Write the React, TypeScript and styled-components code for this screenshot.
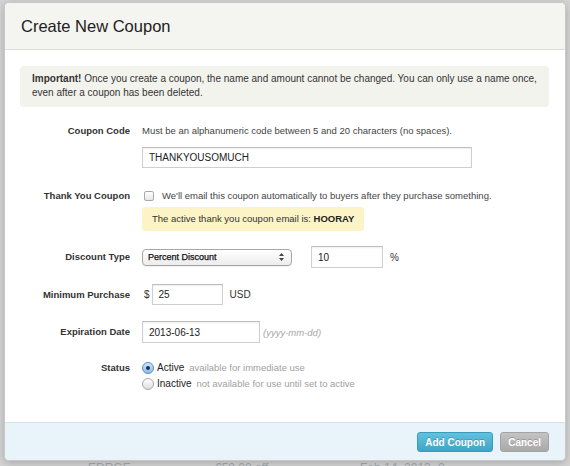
import React from "react";
import styled, { createGlobalStyle } from "styled-components";

const GlobalStyle = createGlobalStyle`
  html, body {
    margin: 0;
    padding: 0;
  }
  body {
    background: #d5d5d5;
    font-family: "Liberation Sans", Helvetica, Arial, sans-serif;
    font-size: 9.5px;
    color: #333;
  }
`;

const Stage = styled.div`
  position: relative;
  width: 570px;
  height: 466px;
  overflow: hidden;
`;

const Backdrop = styled.div`
  padding-top: 460px;
`;

const BackRow = styled.div`
  display: flex;
  padding-left: 88px;
  color: #a3abb3;
  font-size: 12px;
  line-height: 16px;
`;

const BackCell = styled.div<{ $w: number }>`
  width: ${(p) => p.$w}px;
`;

const Modal = styled.div`
  position: absolute;
  left: 4px;
  top: 2px;
  width: 562px;
  height: 459px;
  box-sizing: border-box;
  background: #fff;
  border: 1px solid #c8c8c8;
  border-radius: 5px;
  box-shadow: 0 2px 8px rgba(0, 0, 0, 0.22);
  overflow: hidden;
  display: flex;
  flex-direction: column;
`;

const Header = styled.div`
  height: 47px;
  box-sizing: border-box;
  background: #f4f4f0;
  border-bottom: 1px solid #dddcd5;
  padding: 0 16px;
  display: flex;
  align-items: center;
`;

const Title = styled.h3`
  margin: 0;
  font-size: 16.5px;
  font-weight: normal;
  color: #222;
`;

const Body = styled.div`
  flex: 1;
  padding: 16px 16px 0 15px;
`;

const Notice = styled.p`
  margin: 0;
  background: #f3f3ee;
  border-radius: 4px;
  padding: 6px 12px 7px;
  font-size: 10px;
  line-height: 14px;
  color: #333;
`;

const Field = styled.div<{ $mt: number; $center?: boolean }>`
  display: grid;
  grid-template-columns: 110px 1fr;
  column-gap: 12px;
  margin-top: ${(p) => p.$mt}px;
  align-items: ${(p) => (p.$center ? "center" : "start")};
`;

const Label = styled.div<{ $lh?: number }>`
  text-align: right;
  font-weight: bold;
  color: #333;
  line-height: ${(p) => p.$lh ?? 14}px;
`;

const Help = styled.div`
  line-height: 14px;
  color: #444;
`;

const Inline = styled.div`
  display: flex;
  align-items: center;
`;

const TextInput = styled.div<{ $w: number; $h: number }>`
  width: ${(p) => p.$w}px;
  height: ${(p) => p.$h}px;
  box-sizing: border-box;
  border: 1px solid #cfcfcf;
  border-top-color: #bdbdbd;
  box-shadow: inset 0 1px 2px rgba(0, 0, 0, 0.07);
  background: #fff;
  padding: 0 6px;
  display: flex;
  align-items: center;
  font-size: 10px;
  color: #222;
`;

const CodeInput = styled(TextInput)`
  margin-top: 9px;
`;

const Checkbox = styled.span`
  width: 10px;
  height: 10px;
  margin-left: 2px;
  margin-right: 8px;
  box-sizing: border-box;
  border: 1px solid #a9a9a9;
  border-radius: 2px;
  background: linear-gradient(#fff, #e6e6e6);
`;

const Callout = styled.div`
  margin-top: 4px;
  width: fit-content;
  background: #fcf4c6;
  border-radius: 3px;
  padding: 0 10px;
  line-height: 24px;
  color: #333;

  b {
    color: #222;
  }
`;

const Select = styled.div`
  width: 150px;
  height: 17px;
  box-sizing: border-box;
  border: 1px solid #a6a6a6;
  border-radius: 4px;
  background: linear-gradient(#ffffff, #ececec);
  box-shadow: 0 1px 0 rgba(0, 0, 0, 0.05);
  display: flex;
  align-items: center;
  justify-content: space-between;
  padding: 0 7px 0 5px;
  font-size: 9px;
  color: #111;
  -webkit-text-stroke: 0.25px #111;
`;

const Unit = styled.span<{ $ml: number }>`
  margin-left: ${(p) => p.$ml}px;
  font-size: 10px;
  color: #333;
`;

const Hint = styled.span`
  margin-left: 3px;
  font-style: italic;
  color: #a5a5a5;
`;

const SpacedInput = styled(TextInput)<{ $ml: number }>`
  margin-left: ${(p) => p.$ml}px;
`;

const RadioList = styled.div`
  display: flex;
  flex-direction: column;
`;

const RadioRow = styled.div`
  display: flex;
  align-items: center;
  line-height: 16px;
`;

const Radio = styled.span<{ $on?: boolean }>`
  width: 12px;
  height: 12px;
  box-sizing: border-box;
  border-radius: 50%;
  margin-right: 3px;
  display: flex;
  align-items: center;
  justify-content: center;
  border: 1px solid ${(p) => (p.$on ? "#5a8cc0" : "#a8a8a8")};
  background: ${(p) =>
    p.$on
      ? "linear-gradient(#cfe6fb, #8dbdf0)"
      : "linear-gradient(#ffffff, #dedede)"};

  &::after {
    content: "";
    display: ${(p) => (p.$on ? "block" : "none")};
    width: 4px;
    height: 4px;
    border-radius: 50%;
    background: #1c3450;
  }
`;

const OptionName = styled.span`
  color: #222;
  font-size: 10px;
`;

const OptionNote = styled.span`
  margin-left: 5px;
  color: #a0a0a0;
`;

const Footer = styled.div`
  height: 38px;
  box-sizing: border-box;
  background: #e8f4fa;
  border-top: 1px solid #cfe3ee;
  display: flex;
  justify-content: flex-end;
  align-items: center;
  gap: 7px;
  padding: 1px 16px 0 0;
`;

const Button = styled.button<{ $primary?: boolean }>`
  height: 20px;
  padding: 0 ${(p) => (p.$primary ? 7 : 7)}px;
  font-family: inherit;
  font-size: 10px;
  font-weight: bold;
  color: #fff;
  border-radius: 3px;
  text-shadow: 0 -1px 0 rgba(0, 0, 0, 0.2);
  border: 1px solid ${(p) => (p.$primary ? "#3a9aba" : "#a3a3a3")};
  background: ${(p) =>
    p.$primary
      ? "linear-gradient(#62c2df, #3ea4c6)"
      : "linear-gradient(#c4c4c4, #a9a9a9)"};
  cursor: pointer;
`;

const SelectArrows = () => (
  <svg width="5" height="8" viewBox="0 0 5 8">
    <path d="M2.5 0 L5 3 H0 Z M0 5 H5 L2.5 8 Z" fill="#444" />
  </svg>
);

export default function App() {
  return (
    <>
      <GlobalStyle />
      <Stage>
        <Backdrop>
          <BackRow>
            <BackCell $w={127}>EDRGE</BackCell>
            <BackCell $w={145}>€50.00 off</BackCell>
            <BackCell $w={78}>Feb 14, 2013</BackCell>
            <BackCell $w={20}>0</BackCell>
          </BackRow>
        </Backdrop>

        <Modal>
          <Header>
            <Title>Create New Coupon</Title>
          </Header>

          <Body>
            <Notice>
              <b>Important!</b> Once you create a coupon, the name and amount
              cannot be changed. You can only use a name once, even after a
              coupon has been deleted.
            </Notice>

            <Field $mt={17}>
              <Label>Coupon Code</Label>
              <div>
                <Help>
                  Must be an alphanumeric code between 5 and 20 characters (no
                  spaces).
                </Help>
                <CodeInput $w={330} $h={21}>
                  THANKYOUSOMUCH
                </CodeInput>
              </div>
            </Field>

            <Field $mt={21}>
              <Label>Thank You Coupon</Label>
              <div>
                <Inline>
                  <Checkbox />
                  <Help>
                    We'll email this coupon automatically to buyers after they
                    purchase something.
                  </Help>
                </Inline>
                <Callout>
                  The active thank you coupon email is: <b>HOORAY</b>
                </Callout>
              </div>
            </Field>

            <Field $mt={15} $center>
              <Label>Discount Type</Label>
              <Inline>
                <Select>
                  <span>Percent Discount</span>
                  <SelectArrows />
                </Select>
                <SpacedInput $ml={19} $w={72} $h={22}>
                  10
                </SpacedInput>
                <Unit $ml={7}>%</Unit>
              </Inline>
            </Field>

            <Field $mt={16} $center>
              <Label>Minimum Purchase</Label>
              <Inline>
                <Unit $ml={2}>$</Unit>
                <SpacedInput $ml={2} $w={71} $h={21}>
                  25
                </SpacedInput>
                <Unit $ml={7}>USD</Unit>
              </Inline>
            </Field>

            <Field $mt={16} $center>
              <Label>Expiration Date</Label>
              <Inline>
                <TextInput $w={118} $h={22}>
                  2013-06-13
                </TextInput>
                <Hint>(yyyy-mm-dd)</Hint>
              </Inline>
            </Field>

            <Field $mt={17}>
              <Label $lh={16}>Status</Label>
              <RadioList>
                <RadioRow>
                  <Radio $on />
                  <OptionName>Active</OptionName>
                  <OptionNote>available for immediate use</OptionNote>
                </RadioRow>
                <RadioRow>
                  <Radio />
                  <OptionName>Inactive</OptionName>
                  <OptionNote>not available for use until set to active</OptionNote>
                </RadioRow>
              </RadioList>
            </Field>
          </Body>

          <Footer>
            <Button $primary>Add Coupon</Button>
            <Button>Cancel</Button>
          </Footer>
        </Modal>
      </Stage>
    </>
  );
}
